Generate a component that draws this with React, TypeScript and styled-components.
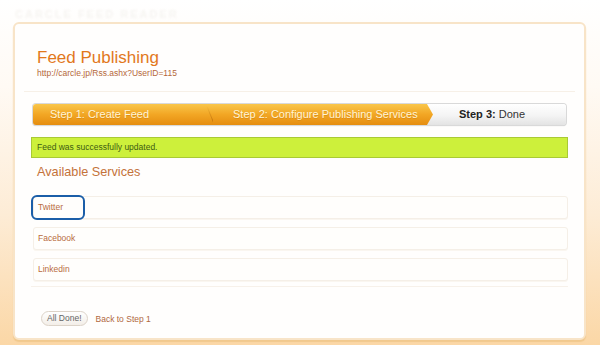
import React from 'react'
import styled, { createGlobalStyle } from 'styled-components'

const GlobalStyle = createGlobalStyle`
    html, body {
        margin: 0;
        padding: 0;
        height: 100%;
    }
    body {
        width: 600px;
        height: 345px;
        overflow: hidden;
        font-family: "Liberation Sans", Arial, sans-serif;
        background: linear-gradient(180deg, #ffffff 0%, #fffaf4 25%, #fdecd6 62%, #fbd7a6 100%);
    }
`

const services = ['Twitter', 'Facebook', 'Linkedin']

const App = () => {
    return (
        <>
            <GlobalStyle />
            <Page>
                <GhostHeader>CARCLE FEED READER</GhostHeader>
                <Panel>
                    <Header>
                        <Title>Feed Publishing</Title>
                        <FeedUrl>http://carcle.jp/Rss.ashx?UserID=115</FeedUrl>
                    </Header>

                    <Body>
                        <StepBar>
                            <Step $active $width={180} $pad={17} $divider>Step 1: Create Feed</Step>
                            <Step $active $arrow $width={220} $pad={20}>Step 2: Configure Publishing Services</Step>
                            <Step $width={135} $pad={27}><b>Step 3:</b> Done</Step>
                        </StepBar>

                        <Banner>Feed was successfully updated.</Banner>

                        <SectionTitle>Available Services</SectionTitle>

                        <ServiceList>
                            {services.map((s, i) => (
                                <ServiceRow key={s}>
                                    <ServiceLink $focused={i === 0}>{s}</ServiceLink>
                                </ServiceRow>
                            ))}
                        </ServiceList>

                        <Footer>
                            <DoneButton>All Done!</DoneButton>
                            <BackLink>Back to Step 1</BackLink>
                        </Footer>
                    </Body>
                </Panel>
            </Page>
        </>
    )
}

const Page = styled.div`
    width: 600px;
    height: 345px;
    display: flex;
    flex-direction: column;
`

const GhostHeader = styled.div`
    height: 22px;
    padding-left: 15px;
    font-size: 11px;
    font-weight: bold;
    letter-spacing: 2px;
    line-height: 28px;
    color: #f6f4f1;
    filter: blur(1px);
    overflow: hidden;
`

const Panel = styled.div`
    margin-left: 13px;
    width: 569px;
    height: 314px;
    border: 2px solid #f8e4c8;
    border-radius: 6px;
    background: #fffefd;
    box-shadow: 0 2px 1px #f1c98e;
    display: flex;
    flex-direction: column;
`

const Header = styled.div`
    padding: 23px 0 0 22px;
    height: 44px;
`

const Title = styled.div`
    font-size: 17px;
    line-height: 21px;
    color: #e2781c;
`

const FeedUrl = styled.div`
    font-size: 8.5px;
    line-height: 10px;
    color: #b5683a;
`

const Body = styled.div`
    margin: 0 9px;
    border-top: 1px solid #f7f0e7;
    padding: 12px 7px 0 7px;
    display: flex;
    flex-direction: column;
`

const StepBar = styled.div`
    margin: 0 2px;
    height: 21px;
    display: flex;
    border-radius: 3px;
    background: linear-gradient(180deg, #ffffff 0%, #f4f4f4 55%, #e3e3e3 100%);
    box-shadow: 0 0 0 1px #d9d9d9, 0 1px 1px #c8c8c8;
`

const Step = styled.div<{ $active?: boolean; $arrow?: boolean; $divider?: boolean; $width: number; $pad: number }>`
    position: relative;
    flex: none;
    width: ${p => p.$width}px;
    padding-left: ${p => p.$pad}px;
    box-sizing: border-box;
    font-size: 11px;
    line-height: 21px;
    white-space: nowrap;
    color: ${p => (p.$active ? '#fff4d6' : '#333')};
    text-shadow: ${p => (p.$active ? '0 1px 0 rgba(190,110,0,.35)' : 'none')};
    background: ${p => (p.$active ? 'linear-gradient(180deg, #f9c64a 0%, #f2a624 50%, #e58d10 100%)' : 'transparent')};
    border-radius: ${p => (p.$divider ? '3px 0 0 3px' : '0')};
    clip-path: ${p => (p.$arrow ? 'polygon(0 0, calc(100% - 6px) 0, 100% 50%, calc(100% - 6px) 100%, 0 100%)' : 'none')};
    margin-left: ${p => (p.$active || p.$arrow ? '0' : '-1px')};

    b {
        color: #222;
    }

    ${p => p.$divider && `
        &::after {
            content: '';
            position: absolute;
            right: 2px;
            top: 2px;
            width: 1px;
            height: 18px;
            background: linear-gradient(180deg, rgba(200,120,0,0) 0%, rgba(150,80,0,.55) 100%);
            transform: skewX(22deg);
        }
    `}
`

const Banner = styled.div`
    margin-top: 12px;
    height: 19px;
    padding-left: 5px;
    background: #cdf03b;
    border: 1px solid #a9ca35;
    font-size: 8.5px;
    line-height: 19px;
    color: #3d5c12;
`

const SectionTitle = styled.div`
    margin-top: 6px;
    padding-left: 6px;
    font-size: 12.7px;
    line-height: 16px;
    color: #c4723a;
`

const ServiceList = styled.div`
    margin: 16px 0 0 2px;
    display: flex;
    flex-direction: column;
    gap: 8px;
`

const ServiceRow = styled.div`
    height: 21px;
    border: 1px solid #f5efe7;
    border-radius: 3px;
    background: #fffefc;
    box-shadow: 0 1px 0 #faf6f0;
`

const ServiceLink = styled.div<{ $focused?: boolean }>`
    width: ${p => (p.$focused ? '45px' : 'auto')};
    height: 21px;
    margin-left: -1px;
    padding-left: 5px;
    font-size: 8.5px;
    line-height: 21px;
    color: #b86c3e;
    border-radius: 4px;
    outline: ${p => (p.$focused ? '2px solid #1b5ea8' : 'none')};
`

const Footer = styled.div`
    margin-top: 5px;
    border-top: 1px solid #f7f1ea;
    padding: 24px 0 0 10px;
    display: flex;
    align-items: center;
    gap: 8px;
`

const DoneButton = styled.div`
    height: 13px;
    padding: 0 5px;
    border: 1px solid #dcd3c8;
    border-radius: 8px;
    background: linear-gradient(180deg, #ffffff 0%, #f3eee8 100%);
    font-size: 8.5px;
    line-height: 13px;
    color: #666;
`

const BackLink = styled.div`
    font-size: 8.5px;
    color: #b0683e;
`

export default App
